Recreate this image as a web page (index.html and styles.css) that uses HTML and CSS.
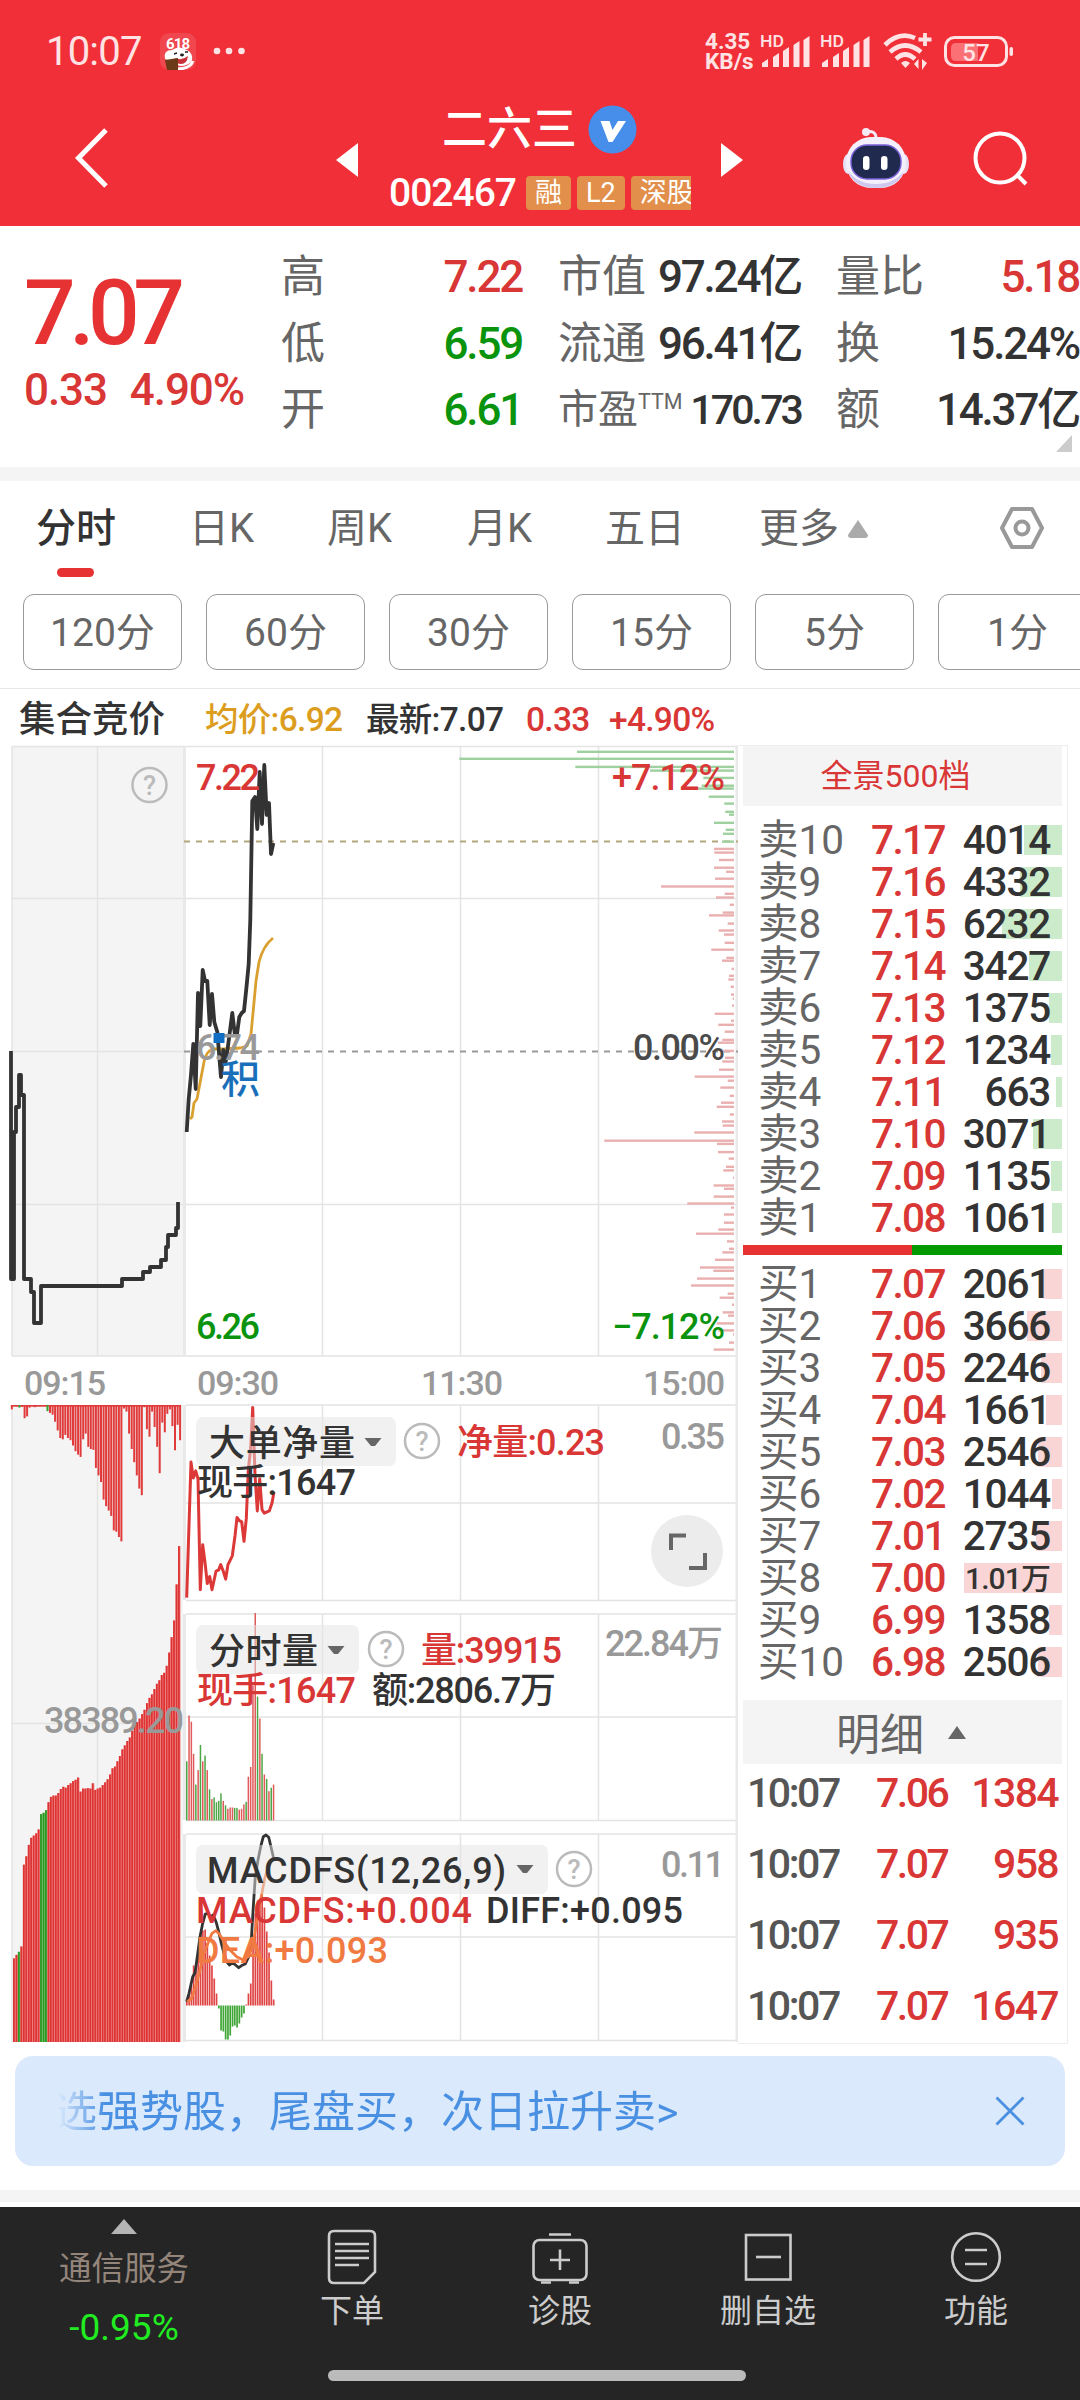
FILE: index.html
```
<!DOCTYPE html>
<html lang="zh-CN">
<head>
<meta charset="UTF-8" />
<meta name="viewport" content="width=device-width, initial-scale=1.0"/>
<title>二六三 002467</title>
<link rel="stylesheet" href="styles.css">
</head>
<body>
<header class="header">
  <div class="status">
    <span class="clock">10:07</span>
    <svg class="app-icon" width="36" height="37" viewBox="0 0 36 37">
      <rect width="36" height="37" rx="9" fill="#f0464e"/>
      <path d="M5 26Q3 17 12 17Q19 12 27 17Q33 20 32 27Q29 33 20 33Z" fill="#fff"/>
      <path d="M17 36Q30 36 33 28" fill="none" stroke="#fff" stroke-width="3"/>
      <path d="M15 25Q22 28 28 23Q27 31 21 31Q16 31 15 25Z" fill="#c8303a"/>
      <path d="M14 21l3-1M28 19l-3 0" stroke="#222" stroke-width="1.6"/>
      <ellipse cx="22" cy="22" rx="2" ry="1.4" fill="#222"/>
      <path d="M5 27L18 25V37H7Z" fill="#6b3a16"/>
      <text x="18" y="15.500" text-anchor="middle" font-size="15" font-weight="700" textLength="24" fill="#fff">618</text>
    </svg>
    <svg class="dots" width="32" height="8" viewBox="0 0 32 8">
      <circle cx="4" cy="4" r="3.3"/><circle cx="16" cy="4" r="3.3"/><circle cx="28.500" cy="4" r="3.3"/>
    </svg>
    <div class="speed"><span>4.35</span><span>KB/s</span></div>
    <svg class="signal" width="51" height="34" viewBox="0 0 51 34">
      <text x="0" y="13" font-size="16" font-weight="500" textLength="24" lengthAdjust="spacingAndGlyphs">HD</text>
      <path d="M2 33v-4l6-4v8zM13 33V23l6-4v14zM23 33V17l6-4v20zM33.500 33V11l6-4v26zM43.500 33V6l6-4v31z"/>
    </svg>
    <svg class="signal second" width="51" height="34" viewBox="0 0 51 34">
      <text x="0" y="13" font-size="16" font-weight="500" textLength="24" lengthAdjust="spacingAndGlyphs">HD</text>
      <path d="M2 33v-4l6-4v8zM13 33V23l6-4v14zM23 33V17l6-4v20zM33.500 33V11l6-4v26zM43.500 33V6l6-4v31z"/>
    </svg>
    <svg class="wifi" width="50" height="38" viewBox="0 0 50 38">
      <g fill="none" stroke="#ffe3e4" stroke-width="4.600">
        <path d="M2 13Q16 -1 32 6"/>
        <path d="M7 20Q22 7 38 20"/>
        <path d="M13 27Q22 18 32 27"/>
        <path d="M42 1v13M35.500 7.500h13" stroke-width="3.800"/>
      </g>
      <path d="M18 31q4.500-4 9 0l-4.500 5zM31 32l4.500-5v10zM39 27v11l5-7z"/>
    </svg>
    <svg class="battery" width="70" height="31" viewBox="0 0 70 31">
      <rect x="1.500" y="1.500" width="61" height="28" rx="9" fill="none" stroke="#ffe3e4" stroke-width="3"/>
      <path d="M12 7H34V25H12Q7 25 7 20V12Q7 7 12 7Z" fill="#fa7075"/>
      <rect x="65.500" y="11" width="3.500" height="9" rx="1.700"/>
      <text x="32" y="24.500" text-anchor="middle" font-size="24" font-weight="500">57</text>
    </svg>
  </div>
  <div class="titlebar">
    <svg class="back" width="36" height="62" viewBox="0 0 36 62">
      <path d="M32 3L4.500 31L32 59" fill="none" stroke="#fff" stroke-width="5"/>
    </svg>
    <svg class="prev" width="22" height="34" viewBox="0 0 22 34"><path d="M0 17L22 0V34Z"/></svg>
    <div class="stock">
      <div class="name"><span>二六三</span>
        <svg width="49" height="49" viewBox="0 0 49 49">
          <circle cx="24.500" cy="24.500" r="24" fill="#468eea"/>
          <path d="M12.500 16h9l3 9 5.500-9h8L24.500 37h-4Z" fill="#fff"/>
        </svg>
      </div>
      <div class="code"><span class="digits">002467</span><i>融</i><i>L2</i><i>深股通</i></div>
    </div>
    <svg class="next" width="22" height="34" viewBox="0 0 22 34"><path d="M22 17L0 0V34Z"/></svg>
    <svg class="robot" width="68" height="62" viewBox="0 0 68 62">
      <circle cx="24" cy="5" r="4" fill="#f4e9f5"/>
      <path d="M24 5Q34 3 34 11" fill="none" stroke="#f4e9f5" stroke-width="3"/>
      <ellipse cx="6" cy="37" rx="5" ry="10" fill="#e6e2f6"/>
      <ellipse cx="62" cy="37" rx="5" ry="10" fill="#e6e2f6"/>
      <rect x="4" y="10" width="60" height="51" rx="25" fill="#f3effb"/>
      <path d="M6 44Q12 61 34 61T62 44Q52 57 34 57T6 44Z" fill="#cfc8ee"/>
      <rect x="9" y="18" width="50" height="34" rx="16" fill="#1f2a4e" stroke="#7b62d8" stroke-width="1.500"/>
      <rect x="21" y="29" width="6.500" height="14" rx="3.200" fill="#fff"/>
      <rect x="39" y="29" width="6.500" height="14" rx="3.200" fill="#fff"/>
    </svg>
    <svg class="search" width="58" height="58" viewBox="0 0 58 58">
      <circle cx="28" cy="28" r="24.500" fill="none" stroke="#fff" stroke-width="4"/>
      <path d="M44 44L54 54" stroke="#fff" stroke-width="4"/>
    </svg>
  </div>
</header>

<section class="summary">
  <div class="quote">
    <div class="last digits">7.07</div>
    <div class="change"><span>0.33</span><span>4.90%</span></div>
  </div>
  <dl class="stats col-a">
    <dt>高</dt><dd class="up">7.22</dd>
    <dt>低</dt><dd class="down">6.59</dd>
    <dt>开</dt><dd class="down">6.61</dd>
  </dl>
  <dl class="stats col-b">
    <dt>市值</dt><dd>97.24亿</dd>
    <dt>流通</dt><dd>96.41亿</dd>
    <dt class="ttm">市盈<sup>TTM</sup></dt><dd class="pe">170.73</dd>
  </dl>
  <dl class="stats col-c">
    <dt>量比</dt><dd class="up">5.18</dd>
    <dt>换</dt><dd>15.24%</dd>
    <dt>额</dt><dd>14.37亿</dd>
  </dl>
  <i class="corner"></i>
</section>

<nav class="tabs">
  <span class="tab active">分时</span>
  <span class="tab">日K</span>
  <span class="tab">周K</span>
  <span class="tab">月K</span>
  <span class="tab">五日</span>
  <span class="tab more">更多<svg width="20" height="18" viewBox="0 0 20 18"><path d="M10 0L20 15Q20 18 17 18H3Q0 18 0 15Z" fill="#aaa"/></svg></span>
  <svg class="setting" width="46" height="44" viewBox="0 0 46 44">
    <path d="M13 3H33L43 22L33 41H13L3 22Z" fill="none" stroke="#999" stroke-width="4" stroke-linejoin="round"/>
    <circle cx="23" cy="22" r="6.500" fill="none" stroke="#999" stroke-width="4"/>
  </svg>
</nav>
<div class="chips">
  <span>120分</span><span>60分</span><span>30分</span><span>15分</span><span>5分</span><span>1分</span>
</div>

<div class="legend">
  <b>集合竞价</b>
  <span class="avg">均价:6.92</span>
  <span class="new">最新:7.07</span>
  <span class="diff">0.33</span>
  <span class="pct">+4.90%</span>
</div>

<main class="main">
  <svg class="charts" width="738" height="1304" viewBox="0 742 738 1304">
    <rect x="12" y="746" width="171" height="610" fill="#f4f4f4"/>
    <rect x="12" y="1405" width="171" height="637" fill="#f4f4f4"/>
    <g class="grid">
      <path d="M12 746.500H738M12 898.500H738M12 1204.500H738M12 1356H738M12 1051.500H183"/>
      <path d="M12 746V1356M97.500 746V1356M322.500 746V1356M460.500 746V1356M598.500 746V1356"/>
      <path d="M12 1405V2042M97.500 1405V2042M12 1723.500H183"/>
      <path d="M186 1405H738M186 1503H738M186 1600.500H738M322.500 1405V1600M460.500 1405V1600M598.500 1405V1600"/>
      <path d="M186 1614H738M186 1717H738M186 1820.500H738M322.500 1614V1820M460.500 1614V1820M598.500 1614V1820"/>
      <path d="M186 1834H738M186 1937H738M186 2040.500H738M322.500 1834V2040M460.500 1834V2040M598.500 1834V2040"/>
      <path class="split" d="M184.500 746V1356M184.500 1405V1600M184.500 1614V1820M184.500 1834V2042M737 746V2042"/>
    </g>
    <path class="dash last-line" d="M184 841.500H738"/>
    <path class="dash zero-line" d="M184 1051.500H738"/>

    <g id="profile"></g>
    <path class="line avg-line" d="M190 1119L192 1117L194 1103L197 1099L200 1083L204 1062Q206 1051 213 1049L223 1049L240 1048L247 1046L251 1034L253 1013L256 981L259 962Q263 946 273 938"/>
    <path class="line price" d="M186.700 1132L188.700 1099L191 1075L193.300 1044L195.700 1089L198 993L200.300 1026L202.700 970L205 981L207.300 981L209.700 1025L212 994L214.300 1022L217.300 1032L221 1077L223.300 1050L225.700 1062L228 1046L232.300 1013L234.700 1033L237 1034L239.300 1017L241.700 1013L244 1011L246.300 989L248.700 964L250.300 920L252.300 801L255 797L257.300 829L259.700 772L262 824L264.300 765L266.700 815L269 803L271 854L273.300 843"/>
    <path class="line price" d="M11 1051V1279H14V1132H16V1107H19V1075H21V1095H24V1279H31V1292H34V1323H41V1286H122V1279H143V1272H150V1267H161V1260H166V1247H168V1235H176V1228H178V1202"/>

    <text class="up" x="196" y="790" textLength="64">7.22</text>
    <text class="up" x="612" y="790" textLength="113">+7.12%</text>
    <text class="faint" x="196" y="1060" textLength="64">6.74</text>
    <text class="mid" x="633" y="1060" textLength="92">0.00%</text>
    <text class="down" x="196" y="1339" textLength="64">6.26</text>
    <text class="down" x="612" y="1339" textLength="113">−7.12%</text>
    <rect x="213.500" y="1033" width="11" height="10" fill="#106fc4"/>
    <text class="note" x="221" y="1093">积</text>

    <g class="axis">
      <text x="24" y="1395" textLength="82">09:15</text>
      <text x="197" y="1395" textLength="82">09:30</text>
      <text x="421" y="1395" textLength="82">11:30</text>
      <text x="643" y="1395" textLength="82">15:00</text>
    </g>

    <g id="auction"></g>
    <text class="faint" x="44" y="1733" textLength="140">38389.20</text>

    <polyline id="net" class="line net"/>
    <g id="volume"></g>
    <g id="macd"></g>
    <polyline id="diff" class="line diff-line"/>
    <polyline id="dea" class="line dea-line"/>

    <rect class="pill" x="196" y="1417" width="200" height="49" rx="7"/>
    <text class="dark" x="209" y="1456" textLength="146">大单净量</text>
    <path class="arrow" d="M364.500 1438H381.500L375 1446H371Z"/>
    <text class="up" x="457" y="1455" textLength="148">净量:0.23</text>
    <text class="dark" x="197" y="1495" textLength="159">现手:1647</text>
    <text class="faint" x="661" y="1449" textLength="64">0.35</text>

    <rect class="pill" x="196" y="1625" width="163" height="49" rx="7"/>
    <text class="dark" x="209" y="1664" textLength="109">分时量</text>
    <path class="arrow" d="M327.500 1646H344.500L338 1654H334Z"/>
    <text class="up" x="421" y="1663" textLength="141">量:39915</text>
    <text class="up" x="197" y="1703" textLength="159">现手:1647</text>
    <text class="dark" x="372" y="1703" textLength="184">额:2806.7万</text>
    <text class="faint" x="605" y="1656" textLength="118">22.84万</text>

    <rect class="pill" x="196" y="1845" width="352" height="49" rx="7"/>
    <text class="dark" x="207" y="1883" textLength="299">MACDFS(12,26,9)</text>
    <path class="arrow" d="M516.500 1865H533.500L527 1873H523Z"/>
    <text class="up" x="196" y="1923" textLength="276">MACDFS:+0.004</text>
    <text class="dark" x="486" y="1923" textLength="197">DIFF:+0.095</text>
    <text class="dea" x="196" y="1963" textLength="192">DEA:+0.093</text>
    <text class="faint" x="661" y="1877" textLength="64">0.11</text>

    <g id="helps"></g>
    <circle cx="687" cy="1551" r="36" fill="#ececec"/>
    <path d="M671 1550V1535.500H686M705 1553V1568H689" fill="none" stroke="#666" stroke-width="4"/>
  </svg>

  <aside class="book">
    <div class="panel-title">全景500档</div>
    <div class="levels" id="asks"></div>
    <div class="ratio"></div>
    <div class="levels" id="bids"></div>
    <div class="ticks-title">明细<svg width="18" height="13" viewBox="0 0 18 13"><path d="M9 0L18 13H0Z" fill="#666"/></svg></div>
    <div class="ticks" id="ticks"></div>
  </aside>
</main>

<div class="banner">
  <span class="marquee">选强势股，尾盘买，次日拉升卖&gt;</span>
  <svg width="30" height="30" viewBox="0 0 30 30"><path d="M1.500 1.500L28.500 28.500M28.500 1.500L1.500 28.500" stroke="#4a8fe0" stroke-width="2.800"/></svg>
</div>
<div class="band"></div>

<footer class="nav">
  <div class="sector">
    <svg width="26" height="15" viewBox="0 0 26 15"><path d="M13 0L26 15H0Z" fill="#b5b5b5"/></svg>
    <span>通信服务</span>
    <em>-0.95%</em>
  </div>
  <div class="item">
    <svg width="56" height="56" viewBox="0 0 56 56">
      <path d="M10 2H46Q51 2 51 7V43L40 54H10Q5 54 5 49V7Q5 2 10 2Z"/>
      <path d="M11 15H45M11 22H45M11 29H45M11 36H35"/>
    </svg>下单
  </div>
  <div class="item">
    <svg width="56" height="56" viewBox="0 0 56 56">
      <rect x="1.500" y="11" width="53" height="40" rx="6"/>
      <path d="M17 5.500H39M28 20.500V41M18 31H38M9 53.500H19M37 53.500H47"/>
    </svg>诊股
  </div>
  <div class="item">
    <svg width="56" height="56" viewBox="0 0 56 56">
      <rect x="6" y="6" width="44.500" height="44.500"/>
      <path d="M16 28H41"/>
    </svg>删自选
  </div>
  <div class="item">
    <svg width="56" height="56" viewBox="0 0 56 56">
      <circle cx="28" cy="28" r="23.800"/>
      <path d="M17 21H39M17 35H39"/>
    </svg>功能
  </div>
  <div class="home"></div>
</footer>
<script src="script.js"></script>
</body>
</html>
```
FILE: styles.css
```
body {
  width: 1080px;
  height: 2400px;
  margin: 0;
  overflow: hidden;
  background: #fff;
  color: #333;
  font-family: Roboto, "Noto Sans CJK SC", sans-serif;
}

svg {
  display: block;
  flex: none;
}

.digits {
  letter-spacing: -0.04em;
}

.up {
  color: #d93636;
  fill: #d93636;
}

.down {
  color: #0a930d;
  fill: #0a930d;
}

/* header */

.header {
  height: 226px;
  background: #f12f38;
  color: #fff;
  fill: #fff;
}

.status {
  display: flex;
  align-items: center;
  height: 102px;
  padding-left: 46px;
  box-sizing: border-box;
  color: #ffe3e4;
  fill: #ffe3e4;
}

.clock {
  width: 114px;
  font-size: 40px;
  letter-spacing: -0.8px;
}

.dots {
  margin-left: 17px;
}

.speed {
  display: flex;
  flex-direction: column;
  margin-left: 460px;
  font-size: 22.5px;
  line-height: 20px;
  font-weight: 700;
  width: 55px;
}

.signal {
  margin-bottom: 1px;
}

.second {
  margin-left: 9px;
}

.wifi {
  margin-left: 12px;
}

.battery {
  margin-left: 11px;
}

.titlebar {
  display: flex;
  height: 124px;
}

.back {
  margin: 25px 0 0 74px;
}

.prev {
  margin: 41px 0 0 226px;
}

.stock {
  width: 333px;
  margin-left: 31px;
  overflow: hidden;
}

.name {
  display: flex;
  align-items: center;
  height: 54px;
  padding-left: 53px;
  font-size: 45px;
  line-height: 54px;
  font-weight: 500;
}

.name span {
  margin-top: 1px;
}

.name svg {
  margin-left: 11px;
}

.code {
  display: flex;
  width: 302px;
  height: 34px;
  margin-top: 20px;
  overflow: hidden;
  line-height: 34px;
  white-space: nowrap;
}

.code .digits {
  flex: none;
  width: 137px;
  font-size: 39px;
  font-weight: 500;
  letter-spacing: -1px;
}

.code i {
  flex: none;
  margin-right: 6px;
  padding: 0 9px;
  border-radius: 4px;
  background: #e28f4b;
  font-size: 27px;
  font-style: normal;
}

.next {
  margin: 41px 0 0 -1px;
}

.robot {
  margin: 25px 0 0 99px;
}

.search {
  margin: 28px 0 0 62px;
}

/* quote summary */

.summary {
  position: relative;
  display: flex;
  height: 241px;
  border-bottom: 14px solid #f4f4f4;
}

.quote {
  width: 281px;
  color: #e63232;
}

.last {
  padding: 34px 0 0 24px;
  font-size: 91px;
  line-height: 106px;
  font-weight: 500;
  letter-spacing: -6.5px;
}

.change {
  display: flex;
  gap: 23px;
  padding-left: 24px;
  font-size: 44px;
  line-height: 48px;
  font-weight: 500;
  letter-spacing: -1.1px;
  color: #d93636;
}

.stats {
  display: grid;
  grid-template-columns: 88px 1fr;
  grid-auto-rows: 66.5px;
  align-content: start;
  margin: 18px 0 0;
  line-height: 66px;
  white-space: nowrap;
}

.stats dt {
  font-size: 44px;
  color: #666;
}

.stats dd {
  margin: 0;
  text-align: right;
  font-size: 44px;
  font-weight: 500;
  letter-spacing: -0.05em;
}

.stats .ttm {
  font-size: 40px;
}

.ttm sup {
  font-size: 21.5px;
  line-height: 0;
}

.stats .pe {
  font-size: 41px;
  letter-spacing: -0.07em;
}

.col-a {
  width: 241px;
}

.col-b {
  width: 243px;
  margin-left: 36px;
}

.col-c {
  width: 243px;
  margin-left: 35px;
}

.corner {
  position: absolute;
  right: 8px;
  bottom: 15px;
  border-left: 16px solid transparent;
  border-bottom: 17px solid #ccc;
}

/* period tabs */

.tabs {
  display: flex;
  height: 113px;
  padding-left: 36px;
  font-size: 40px;
  line-height: 95px;
  color: #666;
}

.tab {
  width: 140px;
}

.tab.active {
  position: relative;
  width: 153px;
  color: #333;
  font-weight: 500;
}

.tab.active::after {
  content: "";
  position: absolute;
  left: 21px;
  top: 87px;
  width: 37px;
  height: 9px;
  border-radius: 5px;
  background: #e63232;
}

.tab:nth-child(5) {
  width: 154px;
}

.tab:nth-child(2),
.tab:nth-child(4) {
  width: 138px;
}

.more {
  display: flex;
  align-items: center;
  gap: 9px;
  height: 95px;
  width: 240px;
}

.setting {
  margin-top: 25px;
}

.chips {
  display: flex;
  gap: 24px;
  height: 94px;
  padding-left: 23px;
  overflow: hidden;
  border-bottom: 1px solid #e6e6e6;
}

.chips span {
  flex: none;
  width: 159px;
  height: 76px;
  border: 1.5px solid #999;
  border-radius: 11px;
  box-sizing: border-box;
  text-align: center;
  font-size: 39px;
  line-height: 76px;
  color: #666;
}

.legend {
  display: flex;
  height: 53px;
  padding-left: 19px;
  line-height: 61px;
  font-size: 33.5px;
  font-weight: 500;
  letter-spacing: -0.7px;
  white-space: nowrap;
}

.legend b {
  width: 186px;
  font-size: 36.5px;
  font-weight: 500;
  letter-spacing: 0;
}

.legend .avg {
  width: 161px;
  color: #dc9d1e;
}

.legend .new {
  width: 160px;
}

.legend .diff {
  width: 83px;
  color: #d93636;
}

.legend .pct {
  color: #d93636;
}

/* charts */

.main {
  display: flex;
  height: 1304px;
}

.charts text {
  font-size: 36px;
  font-weight: 500;
}

.charts .axis text {
  font-size: 34px;
}

.axis,
.faint {
  fill: #999;
}

.mid {
  fill: #4a4a4a;
}

.dark {
  fill: #333;
}

.dea {
  fill: #f07a42;
}

.charts .note {
  font-size: 39px;
  fill: #1a6fba;
}

.grid {
  fill: none;
  stroke: #e4e4e4;
  stroke-width: 1.5;
}

.grid .split {
  stroke: #e9e9e9;
  stroke-width: 3;
}

.dash {
  stroke-width: 2;
  stroke-dasharray: 6 6;
}

.last-line {
  stroke: #b3a57c;
}

.zero-line {
  stroke: #999;
}

.line {
  fill: none;
  stroke-linejoin: round;
  stroke-width: 2.8;
}

.price {
  stroke: #333;
  stroke-width: 3.8;
}

.avg-line {
  stroke: #d9a030;
}

.net {
  stroke: #dc3838;
  stroke-width: 3;
}

.diff-line {
  stroke: #333;
}

.dea-line {
  stroke: #f07a42;
}

.pill {
  fill: rgba(228, 228, 228, 0.5);
}

.arrow {
  fill: #666;
}

.help circle {
  fill: none;
  stroke: #bbb;
  stroke-width: 2.5;
}

.charts .help text {
  font-size: 27px;
  text-anchor: middle;
  fill: #bbb;
}

/* order book */

.book {
  display: flex;
  flex-direction: column;
  width: 330px;
  height: 1299px;
  margin-top: 3px;
  padding: 0 5px;
  border: 1px solid #eee;
  border-left: 0;
  box-sizing: border-box;
}

.panel-title {
  height: 60px;
  margin-bottom: 13px;
  background: #f4f4f4;
  color: #d93636;
  font-size: 32px;
  line-height: 60px;
  text-align: center;
  padding-right: 14px;
}

.level {
  position: relative;
  display: grid;
  grid-template-columns: 113px 91px 103px;
  height: 42px;
  padding-left: 15px;
  line-height: 43px;
  font-size: 40.5px;
  font-weight: 500;
  letter-spacing: -0.04em;
}

.level .label {
  font-weight: 400;
  letter-spacing: 0;
  color: #666;
}

.level .price-cell {
  color: #d93636;
}

.level .qty {
  z-index: 1;
  width: 88px;
  text-align: right;
  letter-spacing: -0.03em;
}

.level .qty.small {
  font-size: 30px;
}

.level .depth {
  position: absolute;
  right: 0;
  top: 6px;
  height: 30px;
}

#asks .depth {
  background: #cbebca;
}

#bids .depth {
  background: #f9d5d5;
}

.ratio {
  flex: none;
  height: 10px;
  margin: 6px 0 8px;
  background: linear-gradient(90deg, #e63232 53%, #039a03 53%);
}

.ticks-title {
  display: flex;
  align-items: center;
  gap: 24px;
  height: 68px;
  margin-top: 17px;
  padding-left: 93px;
  background: #f4f4f4;
  color: #666;
  font-size: 44px;
}

.tick {
  display: grid;
  grid-template-columns: 129px 80px 102px;
  height: 71px;
  padding-left: 4px;
  line-height: 58px;
  font-size: 41px;
  font-weight: 500;
  letter-spacing: -0.06em;
  color: #d93636;
}

.tick span:first-child {
  color: #555;
}

.tick span:last-child {
  text-align: right;
  letter-spacing: -0.04em;
}

/* banner */

.banner {
  display: flex;
  align-items: center;
  justify-content: space-between;
  height: 110px;
  margin: 10px 15px 24px;
  padding: 0 40px 0 39px;
  border-radius: 18px;
  background: #dae9fc;
  color: #4a90e2;
  font-size: 43px;
  box-sizing: border-box;
}

.marquee {
  padding-bottom: 7px;
  -webkit-mask-image: linear-gradient(90deg, transparent 4px, #000 50px);
  mask-image: linear-gradient(90deg, transparent 4px, #000 50px);
}

.band {
  height: 12px;
  margin-bottom: 5px;
  background: #f4f4f4;
}

/* bottom bar */

.nav {
  position: relative;
  display: grid;
  grid-template-columns: 248px repeat(4, 208px);
  height: 193px;
  background: #252525;
}

.sector {
  display: flex;
  flex-direction: column;
  align-items: center;
  padding-top: 12px;
  color: #94857b;
  font-size: 32.5px;
}

.sector span {
  margin-top: 8px;
}

.sector em {
  margin-top: 21px;
  color: #21ec21;
  font-size: 37px;
  font-style: normal;
  line-height: 36px;
}

.item {
  display: flex;
  flex-direction: column;
  align-items: center;
  padding-top: 22px;
  color: #ccc;
  font-size: 32px;
  line-height: 52px;
}

.item svg {
  fill: none;
  stroke: #ccc;
  stroke-width: 2.6;
}

.home {
  position: absolute;
  left: 328px;
  bottom: 19px;
  width: 418px;
  height: 11px;
  border-radius: 6px;
  background: #bbb;
}
```
FILE: script.js
```
const RED = '#e03a3a';
const GREEN = '#35a02c';

const asks = [
  ['卖10', '7.17', '4014', 38], ['卖9', '7.16', '4332', 42], ['卖8', '7.15', '6232', 60],
  ['卖7', '7.14', '3427', 33], ['卖6', '7.13', '1375', 13], ['卖5', '7.12', '1234', 11],
  ['卖4', '7.11', '663', 6], ['卖3', '7.10', '3071', 29], ['卖2', '7.09', '1135', 11],
  ['卖1', '7.08', '1061', 10]
];
const bids = [
  ['买1', '7.07', '2061', 19], ['买2', '7.06', '3666', 35], ['买3', '7.05', '2246', 21],
  ['买4', '7.04', '1661', 16], ['买5', '7.03', '2546', 24], ['买6', '7.02', '1044', 10],
  ['买7', '7.01', '2735', 26], ['买8', '7.00', '1.01万', 98], ['买9', '6.99', '1358', 13],
  ['买10', '6.98', '2506', 24]
];
const ticks = [
  ['10:07', '7.06', '1384'], ['10:07', '7.07', '958'],
  ['10:07', '7.07', '935'], ['10:07', '7.07', '1647']
];

function level([label, price, qty, depth]) {
  const small = qty.includes('万') ? ' small' : '';
  return `<div class="level"><i class="depth" style="width:${depth}px"></i>` +
    `<span class="label">${label}</span><span class="price-cell">${price}</span>` +
    `<span class="qty${small}">${qty}</span></div>`;
}

const byId = id => document.getElementById(id);
byId('asks').innerHTML = asks.map(level).join('');
byId('bids').innerHTML = bids.map(level).join('');
byId('ticks').innerHTML = ticks
  .map(t => `<div class="tick">${t.map(v => `<span>${v}</span>`).join('')}</div>`)
  .join('');

function rect(x, y, w, h, fill) {
  return `<rect x="${x.toFixed(1)}" y="${y.toFixed(1)}" width="${w.toFixed(1)}" height="${h.toFixed(1)}" fill="${fill}"/>`;
}

// traded volume by price: [price offset, left end]
const sold = [
  [29,621],[46,268],[66,616],[75,840],[93,1000],[112,995],[119,960],[139,1016],[156,1063],
  [176,1066],[183,1077],[203,1032],[220,1067],[230,1059],[249,1056]
];
const bought = [
  [267,1032],[276,1033],[294,1047],[313,1032],[323,1068],[340,1035],[359,873],[377,1064],
  [386,1038],[404,1079],[423,1058],[430,1017],[450,1073],[467,1046],[477,1062],[497,1064],
  [514,1024],[534,1069],[541,1056],[561,1085],[578,1077],[587,1075],[605,1082],[624,1083],
  [634,1088],[651,1086],[671,1034],[688,1083],[698,1045],[715,1064],[735,1057],[742,1044],
  [762,1060],[779,1065],[788,1057],[808,1047],[825,974],[835,1073],[852,1051],[872,1079],
  [889,1053],[899,1040],[918,1079],[935,1056],[945,1058],[962,973],[982,703],[990,1041],
  [1010,1044],[1026,1076],[1046,1068],[1055,1060],[1073,1089],[1092,1031],[1100,1062],
  [1119,1031],[1136,952],[1146,1083],[1163,1062],[1183,1062],[1200,1045],[1210,978],
  [1229,1071],[1247,1077],[1256,1057],[1274,1035],[1293,990],[1301,1030],[1320,981],
  [1337,963],[1357,1073],[1367,1049],[1384,1086],[1403,1058],[1411,1074],[1430,1040],
  [1447,1045],[1457,1089],[1477,1077],[1494,1031]
];
const profileBar = fill => ([p, left]) =>
  rect(370 + left / 3, 738.8 + p * 0.408, (1092 - left) / 3, 2.4, fill);
byId('profile').innerHTML =
  sold.map(profileBar('#9fd09f')).join('') + bought.map(profileBar('#eab0b0')).join('');

// call auction: unmatched volume hangs from the top, matched volume stands below
const unmatched = [
  10,3,3,6,4,30,26,6,3,5,3,3,3,3,14,18,22,38,58,75,78,68,75,80,92,105,113,118,78,65,95,100,
  102,143,160,175,215,230,240,252,285,288,300,310,8,15,65,100,130,160,190,205,5,55,72,15,
  50,95,155,40,62,20,10,48,103,45,80
];
const matched = [
  1360,1352,1345,1333,1147,1128,1102,1086,1081,1076,1067,1032,1029,1023,1005,993,990,990,
  984,975,970,972,966,962,957,954,949,981,974,974,973,974,962,977,974,972,966,960,953,942,
  928,924,912,900,885,876,866,858,843,828,823,815,805,795,780,768,760,748,736,728,716,711,
  695,665,630,592,510,423
];
let html = rect(11, 1405, 169, 1.6, RED);
unmatched.forEach((d, i) => {
  html += rect(10.8 + i * 2.55, 1405, 2, d * 0.44, i === 3 || i === 14 ? GREEN : RED);
});
matched.forEach((top, i) => {
  const y = 1360 + top * 0.44;
  const green = i === 2 || (i > 10 && i < 14);
  const x = 13 + i * 2.463;
  html += rect(x, y, 2.5, 2042 - y, green ? '#7cc476' : '#f28a8a');
  html += rect(x, y, 1.8, 2042 - y, green ? '#2b9a22' : '#dd3333');
});
byId('auction').innerHTML = html;

// intraday lines
const net = [
  [560,540],[573,232],[580,268],[587,252],[594,270],[601,522],[608,420],[615,460],[622,508],
  [629,492],[636,522],[648,480],[656,477],[662,465],[670,480],[677,498],[684,465],[697,445],
  [705,400],[711,358],[718,365],[725,368],[732,412],[739,360],[745,250],[752,200],[758,108],
  [765,260],[772,343],[779,270],[786,340],[793,348],[808,343],[816,325],[822,300]
];
const diff = [
  [20,665],[27,640],[38,590],[45,578],[52,530],[60,470],[68,430],[76,402],[84,400],[92,410],
  [100,405],[108,425],[116,455],[124,490],[132,520],[140,545],[148,555],[156,550],[164,553],
  [176,563],[186,556],[196,552],[206,530],[214,480],[220,380],[226,290],[234,240],[242,200],
  [250,170],[258,165],[266,172],[274,205],[282,240]
];
const dea = [
  [22,665],[35,655],[48,615],[60,570],[72,520],[84,490],[96,460],[108,452],[118,462],
  [132,485],[150,510],[170,530],[190,540],[205,530],[218,500],[226,450],[234,400],[244,350],
  [254,295],[264,265],[274,245]
];
function drawLine(id, data, x0, y0, ky) {
  byId(id).setAttribute('points',
    data.map(([x, y]) => `${(x0 + x / 3).toFixed(1)},${(y0 + y * ky).toFixed(1)}`).join(' '));
}
drawLine('net', net, 0, 1360, 0.44);
drawLine('diff', diff, 180, 1780, 1 / 3);
drawLine('dea', dea, 180, 1780, 1 / 3);

const volume = [
  912,808,822,895,965,932,875,912,899,932,976,998,994,1005,1002,985,1002,1012,1020,1017,
  1017,1018,1018,1022,1020,1010,1004,947,925,740,575,765,815,895,942,952,980,972,965
];
const falling = [0, 4, 6, 8, 10, 12, 13, 14, 15, 17, 21, 22, 26, 31, 33, 35, 37];
byId('volume').innerHTML = volume.map((top, i) => {
  const y = 1360 + top * 0.44;
  return rect(186 + i * 2.283, y, 1.5, 1820.5 - y, falling.includes(i) ? '#4da645' : '#e05a5a');
}).join('');

const macd = [
  5,12,20,40,38,58,72,75,76,63,50,40,27,12,-3,-25,-26,-34,-34,-30,-21,-20,-22,-18,-12,-8,
  1,12,22,58,92,105,101,110,98,74,53,25,6
];
byId('macd').innerHTML = macd.map((v, i) =>
  rect(186 + i * 2.283, 2005.5 - Math.max(v, 0), 1.7, Math.abs(v), v > 0 ? '#e04545' : '#3fa535')
).join('');

byId('helps').innerHTML = [[149.5, 785], [422, 1441], [386, 1649], [574, 1869]]
  .map(([x, y]) => `<g class="help"><circle cx="${x}" cy="${y}" r="17"/><text x="${x}" y="${y + 10}">?</text></g>`)
  .join('');
```
